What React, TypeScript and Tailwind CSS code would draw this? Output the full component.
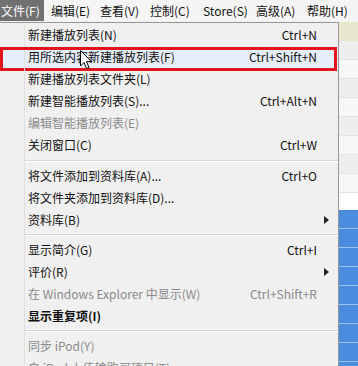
type Item = {
  label: string;
  key?: string;
  arrow?: boolean;
  disabled?: boolean;
  bold?: boolean;
  selected?: boolean;
};

type Entry = Item | { sep: number };

const entries: Entry[] = [
  { label: '新建播放列表(N)', key: 'Ctrl+N' },
  { label: '用所选内容新建播放列表(F)', key: 'Ctrl+Shift+N', selected: true },
  { label: '新建播放列表文件夹(L)' },
  { label: '新建智能播放列表(S)...', key: 'Ctrl+Alt+N' },
  { label: '编辑智能播放列表(E)', disabled: true },
  { label: '关闭窗口(C)', key: 'Ctrl+W' },
  { sep: 9 },
  { label: '将文件添加到资料库(A)...', key: 'Ctrl+O' },
  { label: '将文件夹添加到资料库(D)...' },
  { label: '资料库(B)', arrow: true },
  { sep: 8 },
  { label: '显示简介(G)', key: 'Ctrl+I' },
  { label: '评价(R)', arrow: true },
  { label: '在 Windows Explorer 中显示(W)', key: 'Ctrl+Shift+R', disabled: true },
  { label: '显示重复项(I)', bold: true },
  { sep: 8 },
  { label: '同步 iPod(Y)', disabled: true },
  { label: '自 iPod 上传输购买项目(T)', disabled: true },
];

const menus: [string, string][] = [
  ['编辑(E)', 'w-[49px]'],
  ['查看(V)', 'w-[50px]'],
  ['控制(C)', 'w-[53px]'],
  ['Store(S)', 'w-[53px]'],
  ['高级(A)', 'w-[51px]'],
  ['帮助(H)', 'w-[50px]'],
];

function Row({ item }: { item: Item }) {
  return (
    <div className={`relative flex h-[22px] items-stretch ${item.selected ? 'bg-[#e6eef9]' : ''}`}>
      <div className="w-[25px] shrink-0 border-r border-[#e0e0e0]" />
      <div
        className={`flex flex-1 items-center whitespace-nowrap pl-[3px] ${
          item.disabled ? 'text-[#8a8a8a]' : 'text-[#111]'
        } ${item.bold ? 'font-bold' : ''}`}
      >
        {item.label}
      </div>
      {item.key && (
        <div className={`flex items-center whitespace-nowrap ${item.disabled ? 'text-[#8a8a8a]' : 'text-[#111]'}`}>
          {item.key}
        </div>
      )}
      <div className="flex w-[21px] shrink-0 items-center pl-[7px]">
        {item.arrow && (
          <svg width="5" height="8" viewBox="0 0 5 8">
            <path d="M0 0 L5 4 L0 8 Z" fill="#222" />
          </svg>
        )}
      </div>
      {item.selected && (
        <div className="absolute left-0 top-[1px] h-[24px] w-[337px] border-[3px] border-[#e3131b]" />
      )}
    </div>
  );
}

export default function App() {
  return (
    <div
      className="relative h-[366px] w-[358px] overflow-hidden bg-[#f0f0f0] text-[12px] leading-none"
      style={{ fontFamily: '"Noto Sans CJK SC", "Noto Sans", sans-serif' }}
    >
      {/* menu bar */}
      <div className="flex h-[22px] items-stretch bg-[#f5f5f5] text-[#111]">
        <div className="w-[51px]">
          <div className="flex h-[21px] w-[44px] items-center bg-[#717171] pl-[1px] text-white">文件(F)</div>
        </div>
        {menus.map(([m, w]) => (
          <div key={m} className={`flex items-center whitespace-nowrap pb-[1px] ${w}`}>
            {m}
          </div>
        ))}
      </div>

      <div className="flex">
        {/* dropdown */}
        <div className="w-[339px] shrink-0 border-r border-t border-[#979797] bg-[#f0f0f0] pt-[1px] shadow-[2px_2px_3px_rgba(0,0,0,0.35)]">
          {entries.map((e, i) =>
            'sep' in e ? (
              <div key={i} className={`flex items-stretch ${e.sep === 9 ? 'h-[9px]' : 'h-[8px]'}`}>
                <div className="w-[25px] shrink-0 border-r border-[#e0e0e0]" />
                <div className="flex flex-1 flex-col justify-center">
                  <div className="h-px bg-[#d5d5d5]" />
                  <div className="h-px bg-white" />
                </div>
              </div>
            ) : (
              <Row key={i} item={e} />
            ),
          )}
        </div>

        {/* app behind the menu */}
        <div className="flex flex-1 flex-col">
          <div className="h-[19px] bg-[#e8e6cc]" />
          {[0, 1, 2, 3, 4, 5, 6, 7].map((n) => (
            <div key={n} className={`h-[19px] border-b border-[#e2e2e2] ${n % 2 ? 'bg-[#f7f7f7]' : 'bg-[#eeeeee]'}`} />
          ))}
          <div className="h-[17px] bg-white" />
          {[0, 1, 2, 3, 4, 5, 6, 7, 8].map((n) => (
            <div key={n} className="h-[19px] border-b border-[#9cc1ee] bg-[#4a8ddf]" />
          ))}
        </div>
      </div>

      {/* mouse pointer */}
      <svg className="absolute left-[80px] top-[50px]" width="13" height="20" viewBox="0 0 13 20">
        <path d="M0.5 0.5 L0.5 16 L4 12.5 L6.6 18.5 L9 17.5 L6.5 11.6 L11.3 11.6 Z" fill="white" stroke="black" strokeWidth="1" />
      </svg>
    </div>
  );
}
